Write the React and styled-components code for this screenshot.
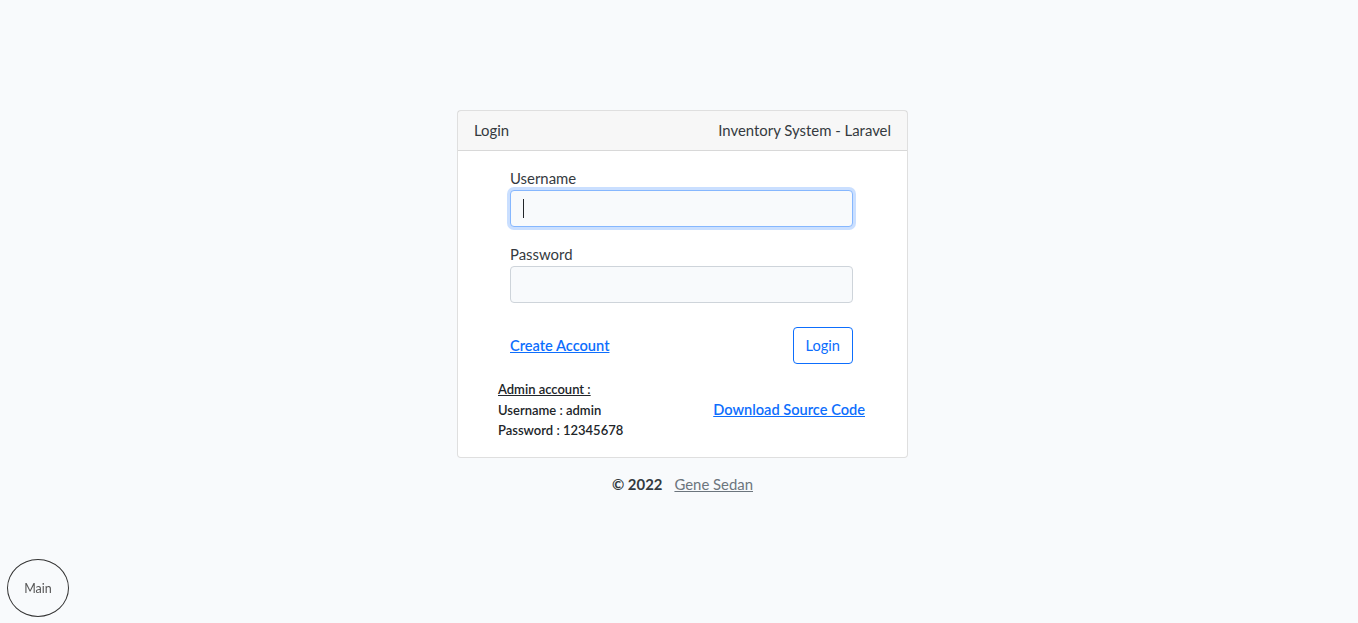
import React from "react";
import styled, { createGlobalStyle, keyframes } from "styled-components";

const GlobalStyle = createGlobalStyle`
  html, body {
    margin: 0;
    padding: 0;
    background: #f8fafc;
    font-family: "Lato", "Noto Sans", sans-serif;
    font-size: 14.9px;
    color: #212529;
  }
`;

const Page = styled.div`
  min-height: 623px;
  padding-top: 110px;
  padding-left: 7px;
  box-sizing: border-box;
  display: flex;
  flex-direction: column;
  align-items: center;
`;

const Card = styled.div`
  width: 451px;
  background: #fff;
  border: 1px solid rgba(0, 0, 0, 0.125);
  border-radius: 4px;
  box-sizing: border-box;
`;

const CardHeader = styled.div`
  display: flex;
  justify-content: space-between;
  align-items: center;
  padding: 8px 16px;
  line-height: 23px;
  background: rgba(0, 0, 0, 0.03);
  border-bottom: 1px solid rgba(0, 0, 0, 0.125);
  color: #343a40;
`;

const CardBody = styled.div`
  padding: 16px;
`;

const Form = styled.div`
  padding: 0 38px 0 36px;
`;

const Field = styled.div`
  margin-bottom: 16px;
`;

const Label = styled.label`
  display: block;
  line-height: 23px;
  color: #343a40;
`;

const InputWrap = styled.div`
  position: relative;
`;

const Input = styled.input`
  display: block;
  width: 100%;
  box-sizing: border-box;
  height: 37px;
  padding: 6px 12px;
  font-size: 14.4px;
  font-family: inherit;
  background: #f8fafc;
  border: 1px solid ${(p) => (p.$focused ? "#86b7fe" : "#ced4da")};
  border-radius: 4px;
  outline: none;
  caret-color: transparent;
  box-shadow: ${(p) =>
    p.$focused ? "0 0 0 3px rgba(13, 110, 253, 0.22)" : "none"};
`;

const blink = keyframes`
  0%, 100% { opacity: 1; }
`;

const Caret = styled.span`
  position: absolute;
  left: 13px;
  top: 9px;
  width: 1px;
  height: 19px;
  background: #212529;
  animation: ${blink} 1s infinite;
`;

const ActionRow = styled.div`
  display: flex;
  justify-content: space-between;
  align-items: center;
  margin-top: 24px;
`;

const Link = styled.a`
  color: #0d6efd;
  text-decoration: underline;
  font-weight: 600;
  font-size: 14.6px;
  cursor: pointer;
`;

const OutlineButton = styled.button`
  height: 37px;
  padding: 0 12px;
  font-family: inherit;
  font-size: 14.6px;
  color: #0d6efd;
  background: #fff;
  border: 1px solid #0d6efd;
  border-radius: 4px;
`;

const InfoRow = styled.div`
  display: flex;
  justify-content: space-between;
  align-items: center;
  margin-top: 15px;
  padding: 0 26px 0 24px;
`;

const InfoBlock = styled.div`
  font-size: 13px;
  font-weight: 600;
  line-height: 20.5px;
  color: #212529;
`;

const InfoTitle = styled.div`
  text-decoration: underline;
`;

const Footer = styled.div`
  margin-top: 15px;
  display: flex;
  gap: 12px;
  align-items: center;
  line-height: 23px;
`;

const Copy = styled.span`
  font-weight: 700;
  color: #343a40;
`;

const Author = styled.a`
  color: #6c757d;
  text-decoration: underline;
`;

const MainBubble = styled.div`
  position: fixed;
  left: 7px;
  bottom: 6px;
  width: 60px;
  height: 56px;
  border: 1px solid #333;
  border-radius: 50%;
  display: flex;
  align-items: center;
  justify-content: center;
  font-size: 12.5px;
  color: #555;
`;

export default function App() {
  return (
    <>
      <GlobalStyle />
      <Page>
        <Card>
          <CardHeader>
            <span>Login</span>
            <span>Inventory System - Laravel</span>
          </CardHeader>
          <CardBody>
            <Form>
              <Field>
                <Label>Username</Label>
                <InputWrap>
                  <Input $focused type="text" />
                  <Caret />
                </InputWrap>
              </Field>
              <Field>
                <Label>Password</Label>
                <Input type="password" />
              </Field>
              <ActionRow>
                <Link>Create Account</Link>
                <OutlineButton>Login</OutlineButton>
              </ActionRow>
            </Form>
            <InfoRow>
              <InfoBlock>
                <InfoTitle>Admin account :</InfoTitle>
                <div>Username : admin</div>
                <div>Password : 12345678</div>
              </InfoBlock>
              <Link>Download Source Code</Link>
            </InfoRow>
          </CardBody>
        </Card>
        <Footer>
          <Copy>© 2022</Copy>
          <Author>Gene Sedan</Author>
        </Footer>
      </Page>
      <MainBubble>Main</MainBubble>
    </>
  );
}
